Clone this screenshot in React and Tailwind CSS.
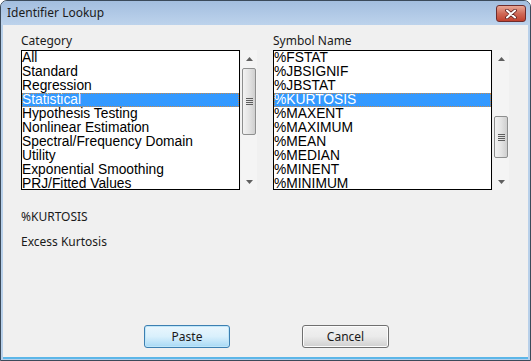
import React from "react";

const categories = [
  "All",
  "Standard",
  "Regression",
  "Statistical",
  "Hypothesis Testing",
  "Nonlinear Estimation",
  "Spectral/Frequency Domain",
  "Utility",
  "Exponential Smoothing",
  "PRJ/Fitted Values",
];

const symbols = [
  "%FSTAT",
  "%JBSIGNIF",
  "%JBSTAT",
  "%KURTOSIS",
  "%MAXENT",
  "%MAXIMUM",
  "%MEAN",
  "%MEDIAN",
  "%MINENT",
  "%MINIMUM",
];

function ArrowUp() {
  return (
    <svg width="7" height="4" viewBox="0 0 7 4">
      <path d="M3.5 0 L7 4 L0 4 Z" fill="#606060" />
    </svg>
  );
}
function ArrowDown() {
  return (
    <svg width="7" height="4" viewBox="0 0 7 4">
      <path d="M0 0 L7 0 L3.5 4 Z" fill="#606060" />
    </svg>
  );
}

function Scrollbar({ thumbTop, thumbHeight }) {
  return (
    <div className="w-[16px] h-[140px] bg-[#f4f4f4] flex flex-col ml-[1px]">
      <div className="h-[17px] flex items-center justify-center shrink-0">
        <ArrowUp />
      </div>
      <div className="flex-1 flex flex-col">
        <div style={{ height: thumbTop }} className="shrink-0" />
        <div
          style={{ height: thumbHeight }}
          className="shrink-0 mx-[1px] rounded-[2px] border border-[#8e8f8f] bg-gradient-to-r from-[#f3f3f3] via-[#e4e4e4] to-[#cfcfcf] flex flex-col items-center justify-center gap-[1px]"
        >
          <div className="w-[7px] h-[1px] bg-[#5d5d5d]" />
          <div className="w-[7px] h-[1px] bg-[#5d5d5d]" />
          <div className="w-[7px] h-[1px] bg-[#5d5d5d]" />
          <div className="w-[7px] h-[1px] bg-[#5d5d5d]" />
        </div>
      </div>
      <div className="h-[17px] flex items-center justify-center shrink-0">
        <ArrowDown />
      </div>
    </div>
  );
}

function ListBox({ label, items, selected, thumbTop, thumbHeight }) {
  return (
    <div className="flex flex-col">
      <div className="h-[15px] leading-[15px] text-[12px] text-[#1a1a1a] font-['Noto_Sans',sans-serif]">
        {label}
      </div>
      <div className="flex mt-[2px]">
        <div className="w-[219px] h-[140px] border border-black bg-white overflow-hidden">
          {items.map((it, i) => (
            <div
              key={it}
              className={
                "h-[14px] leading-[14px] text-[13.8px] whitespace-nowrap font-['Liberation_Sans',Arial,sans-serif] " +
                (i === selected
                  ? "bg-[#3399ff] text-white outline-1 outline-dotted outline-[#c98a4a] -outline-offset-1"
                  : "text-black")
              }
            >
              {it}
            </div>
          ))}
        </div>
        <Scrollbar thumbTop={thumbTop} thumbHeight={thumbHeight} />
      </div>
    </div>
  );
}

export default function App() {
  return (
    <div className="w-[531px] h-[361px] flex flex-col border border-[#3b4a5a] rounded-t-[7px] bg-[#b8d0ea] overflow-hidden">
      {/* Title bar */}
      <div className="h-[24px] shrink-0 flex items-start justify-between bg-gradient-to-b from-[#a3bedf] to-[#bdd3ec]">
        <div className="pl-[6px] pt-[4px] text-[12px] leading-[16px] text-[#1b1b1b] font-['Noto_Sans',sans-serif]">
          Identifier Lookup
        </div>
        <div className="mt-[4px] mr-[4px] w-[30px] h-[17px] rounded-[3px] border border-[#6e2c2c] bg-gradient-to-b from-[#e8a796] via-[#d06a58] to-[#c0402e] flex items-center justify-center">
          <svg width="12" height="10" viewBox="0 0 12 10">
            <path d="M2 1.5 L10 8.5 M10 1.5 L2 8.5" stroke="#5a1e1e" strokeWidth="3.6" strokeLinecap="round" />
            <path d="M2 1.5 L10 8.5 M10 1.5 L2 8.5" stroke="#ffffff" strokeWidth="2" strokeLinecap="round" />
          </svg>
        </div>
      </div>
      {/* Client area */}
      <div className="flex-1 mx-[2px] mb-[1px] border-b-2 border-[#5cb6e8] bg-[#f0f0f0] flex flex-col pl-[18px] pt-[8px] pb-[9px] font-['Noto_Sans',sans-serif] text-[12px] text-[#1a1a1a]">
        <div className="flex gap-[16px]">
          <ListBox label="Category" items={categories} selected={3} thumbTop={1} thumbHeight={67} />
          <ListBox label="Symbol Name" items={symbols} selected={3} thumbTop={49} thumbHeight={42} />
        </div>
        <div className="mt-[19px] h-[15px] leading-[15px]">%KURTOSIS</div>
        <div className="mt-[10px] h-[15px] leading-[15px]">Excess Kurtosis</div>
        <div className="mt-auto flex pl-[123px] gap-[72px]">
          <button className="w-[86px] h-[23px] rounded-[3px] border border-[#3c7fb1] bg-gradient-to-b from-[#eaf6fd] via-[#d9f0fc] to-[#a7d9f5] shadow-[inset_0_0_0_1px_#bfe6f9] text-[12px] text-[#1a1a1a] font-['Noto_Sans',sans-serif]">
            Paste
          </button>
          <button className="w-[87px] h-[23px] rounded-[3px] border border-[#707070] bg-gradient-to-b from-[#f2f2f2] via-[#ebebeb] to-[#cfcfcf] shadow-[inset_0_0_0_1px_#fcfcfc] text-[12px] text-[#1a1a1a] font-['Noto_Sans',sans-serif]">
            Cancel
          </button>
        </div>
      </div>
    </div>
  );
}
